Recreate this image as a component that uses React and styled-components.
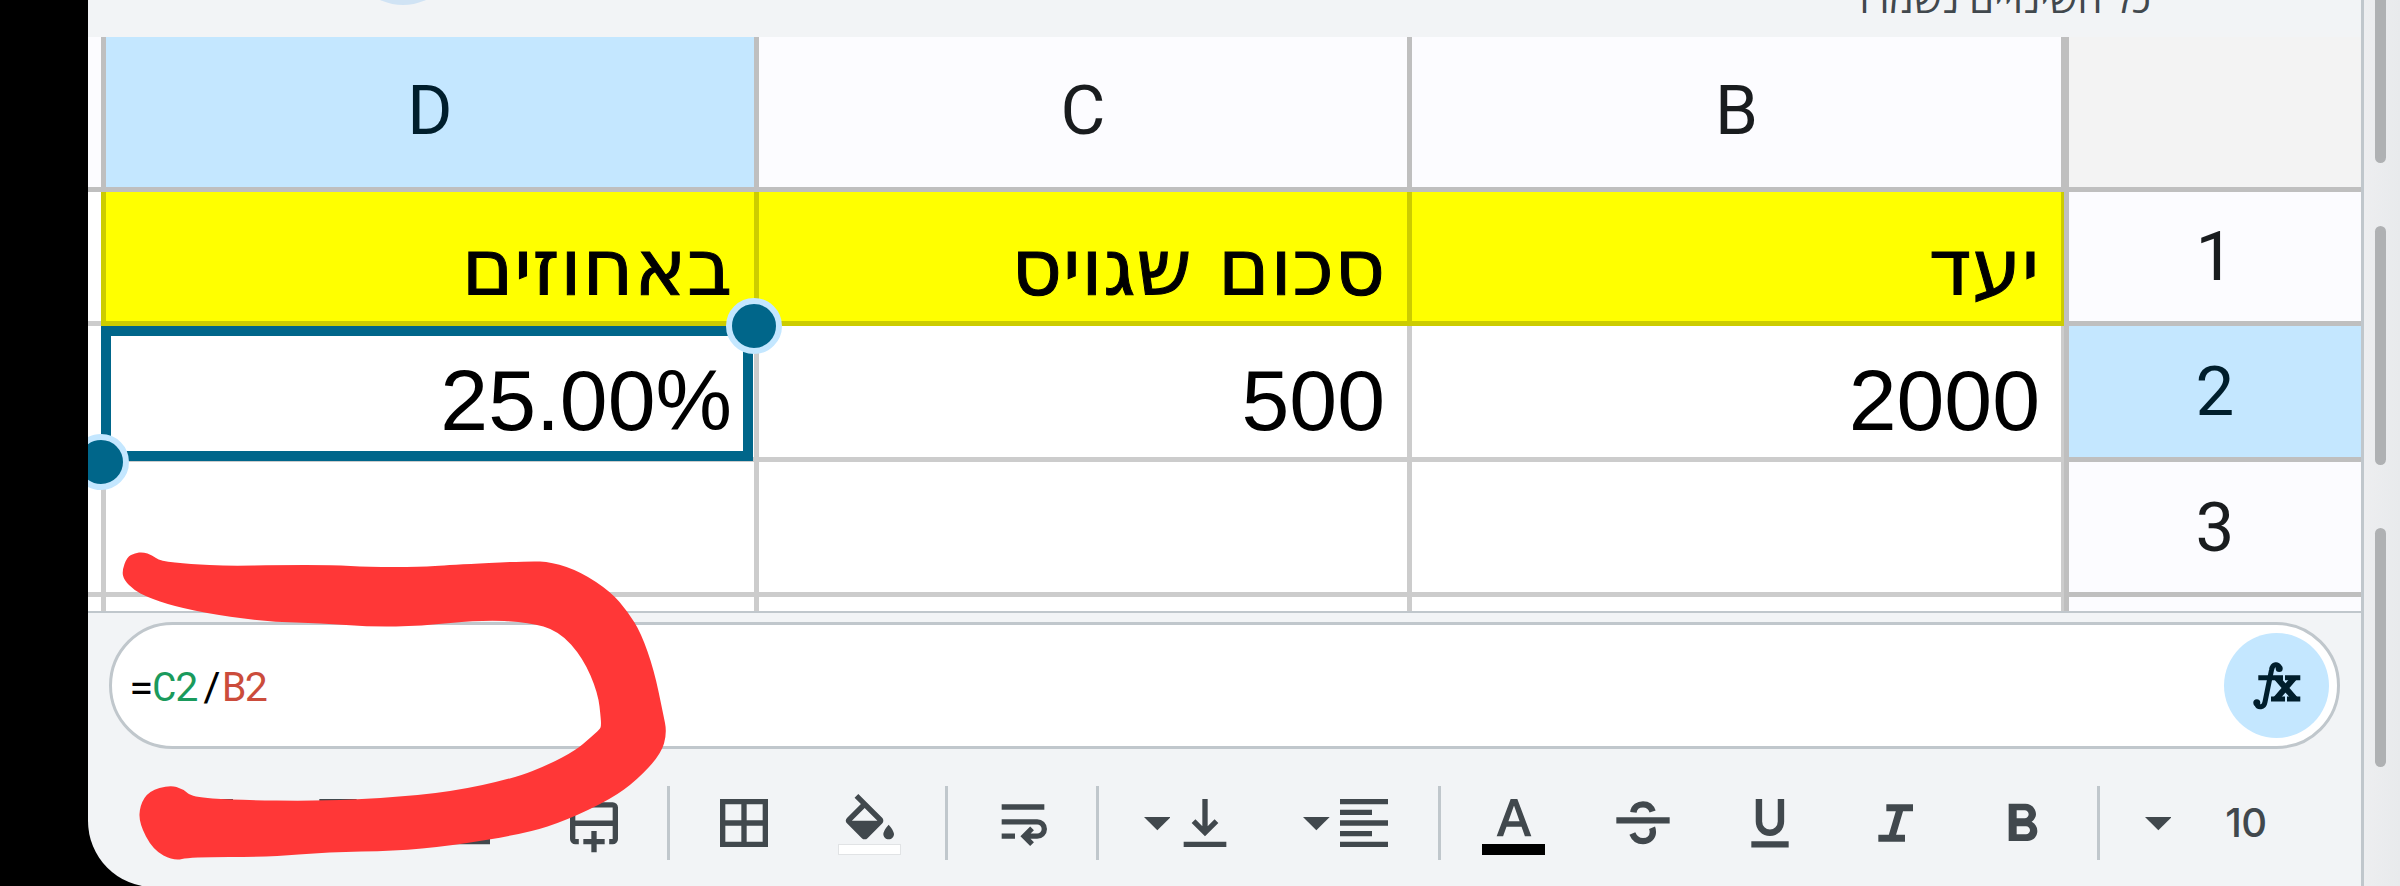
import React from 'react'
import styled, { createGlobalStyle } from 'styled-components'
import { MdBorderAll, MdFormatAlignLeft, MdFormatBold, MdFormatColorFill, MdFormatColorText } from 'react-icons/md'


const GlobalStyle = createGlobalStyle`
   body {
      margin: 0;
      background: #000000;
      overflow: hidden;
   }
`

const Screen = styled.div`
   position: relative;
   display: flex;
   width: 2400px;
   height: 886px;
   padding-left: 88px;
   box-sizing: border-box;
   overflow: hidden;
`

const Panel = styled.main`
   display: flex;
   flex-direction: column;
   width: 2273px;
   height: 887px;
   background: #f2f4f6;
   border-right: 3px solid #c0c7cc;
   border-bottom-left-radius: 66px;
   overflow: hidden;
`

const TopBar = styled.header`
   position: relative;
   display: flex;
   justify-content: flex-end;
   flex: none;
   height: 37px;
   overflow: hidden;
`

const Avatar = styled.span`
   position: absolute;
   left: 260px;
   bottom: 32px;
   width: 110px;
   height: 110px;
   border-radius: 50%;
   background: #d0e3f4;
`

const Status = styled.span`
   margin: -30px 210px 0 0;
   font: 500 39.6px/56px "Open Sans", "Noto Sans", sans-serif;
   color: #41484d;
   white-space: nowrap;
`

const Sheet = styled.section`
   position: relative;
   display: grid;
   flex: none;
   grid-template-columns: 13px 653px 653px 657px 297px;
   grid-template-rows: 155px 134px 136px 135px 20px;
   height: 574px;
   border-bottom: 2px solid #c0c7cc;
   background: #ffffff;
   overflow: hidden;
`

const Cell = styled.div`
   display: flex;
   align-items: center;
   justify-content: flex-end;
   box-sizing: border-box;
   padding: ${p => p.$yellow ? 0 : 16}px ${p => p.$last || p.$yellow ? 21 : 22}px 0 0;
   border: 0 solid ${p => p.$yellow ? '#cccc00' : '#cccccc'};
   border-width: 0 ${p => p.$last ? 3 : 0}px 5px ${p => p.$stub ? 0 : 5}px;
   background: ${p => p.$yellow ? '#ffff00' : '#ffffff'};
   font: 400 86px/96px "Liberation Sans", Arial, sans-serif;
   color: #000000;
   white-space: nowrap;
`

const Hebrew = styled.span`
   font: 400 78px/98px "DejaVu Sans", sans-serif;
   letter-spacing: 0.8px;
   -webkit-text-stroke: 1px #000000;
   padding-top: 23px;
`

const Heading = styled(Cell)`
   justify-content: center;
   padding: 0 0 3px;
   border-color: #bfbfbf;
   background: ${p => p.$active ? '#c4e7ff' : p.$corner ? '#f3f3f3' : '#fcfcff'};
   font: 400 69px/80px Roboto, sans-serif;
   color: ${p => p.$active ? '#001e2c' : '#191c1e'};
`

const RowHeading = styled(Heading)`
   padding: 1px 0 0;
`

const Selection = styled.div`
   position: absolute;
   left: 13px;
   top: 289px;
   width: 652px;
   height: 135px;
   box-sizing: border-box;
   border: 10px solid #00668a;
`

const Handle = styled.span`
   position: absolute;
   width: 44px;
   height: 44px;
   border: 6px solid #c4e7ff;
   border-radius: 50%;
   background: #00668a;
   ${p => p.$end ? 'left: -38px; bottom: -39px;' : 'right: -39px; top: -38px;'}
`

const FormulaRow = styled.div`
   flex: none;
   padding: 9px 21px 0;
`

const FormulaBar = styled.div`
   display: flex;
   align-items: center;
   justify-content: space-between;
   box-sizing: border-box;
   height: 127px;
   padding: 0 8px 0 17px;
   border: 3px solid #c0c7cc;
   border-radius: 64px;
   background: #ffffff;
`

const Formula = styled.code`
   padding-bottom: 2px;
   font: 400 41px/48px "Roboto Mono", "DejaVu Sans Mono", monospace;
   letter-spacing: -1.4px;
   color: #000000;
`

const Ref = styled.span`
   color: ${p => p.$color};
`

const FxButton = styled.button`
   display: flex;
   align-items: center;
   justify-content: center;
   width: 105px;
   height: 105px;
   padding: 0;
   border: 0;
   border-radius: 50%;
   background: #c4e7ff;
   color: #001e2c;
`

const Toolbar = styled.nav`
   display: flex;
   align-items: center;
   flex: none;
   height: 147px;
   color: #41484d;
`

const Tool = styled.span`
   display: flex;
   flex-direction: column;
   flex: none;
   width: 64px;
   height: 64px;
   margin-left: ${p => p.$gap}px;
   padding-top: ${p => p.$drop || 0}px;
   box-sizing: border-box;
   overflow: visible;

   svg {
      flex: none;
      width: 64px;
      height: ${p => p.$short ? 46 : 64}px;
   }
`

const Swatch = styled.span`
   flex: none;
   box-sizing: border-box;
   width: 63px;
   height: 11px;
   margin-top: ${p => p.$gap}px;
   border: 1px solid ${p => p.$line};
   background: ${p => p.$color};
`

const Divider = styled.span`
   flex: none;
   width: 3px;
   height: 74px;
   margin-left: ${p => p.$gap}px;
   background: #c0c7cc;
`

const CaretIcon = styled.svg`
   flex: none;
   width: 26.7px;
   height: 13.4px;
   margin: 3px 0 0 ${p => p.$gap}px;
`

const FontSize = styled.span`
   margin-left: 54px;
   font: 450 40px/48px Inter, sans-serif;
   letter-spacing: -0.5px;
`

const Gutter = styled.aside`
   flex: 1;
   display: flex;
   flex-direction: column;
   align-items: flex-start;
   gap: 63px;
   padding-left: 11px;
   background: linear-gradient(90deg, #edeef0, #e8eaec);
`

const Thumb = styled.span`
   flex: none;
   width: 11px;
   height: ${p => p.$first ? 169 : 239}px;
   margin-top: ${p => p.$first ? -6 : 0}px;
   border-radius: 6px;
   background: #afb1b3;
`

const Marker = styled.svg`
   position: absolute;
   left: 0;
   top: 0;
   width: 700px;
   height: 886px;
   pointer-events: none;
`

const Stroke = ({ d, width = 2 }) => (
   <svg viewBox="0 0 24 24" fill="none" stroke="currentColor" strokeWidth={width}>
      <path d={d}/>
   </svg>
)

const Caret = ({ gap }) => (
   <CaretIcon $gap={gap} viewBox="7 10 10 5">
      <path d="M7 10l5 5 5-5z" fill="currentColor"/>
   </CaretIcon>
)

const markerPoints = [
   [143, 552], [152, 555], [160, 561], [190, 564], [229, 566], [277, 565], [333, 565], [368, 567],
   [420, 567], [450, 565], [528, 561], [552, 562], [581, 572], [611, 592], [628, 612], [641, 633],
   [654, 670], [663, 713], [667, 733], [661, 754], [637, 780], [611, 799], [567, 820], [528, 833],
   [450, 846], [394, 851], [329, 852], [268, 857], [190, 857], [174, 861], [153, 850], [139, 823],
   [140, 805], [149, 791], [170, 785], [183, 789], [192, 797], [233, 800], [320, 801], [385, 798], [450, 792],
   [515, 778], [550, 764], [576, 750], [590, 738], [600, 729], [601, 726], [601, 720], [598, 693], [583, 658], [559, 631],
   [528, 622], [481, 620], [420, 626], [372, 627], [320, 623], [272, 622], [216, 615], [173, 606],
   [147, 597], [134, 590], [124, 580], [122, 571], [127, 557], [135, 553],
]

// closed curve running through the midpoints of the outline
const smooth = points => {
   const mid = (a, b) => `${(a[0] + b[0]) / 2} ${(a[1] + b[1]) / 2}`
   const parts = points.map((p, i) => `Q${p[0]} ${p[1]} ${mid(p, points[(i + 1) % points.length])}`)
   return `M${mid(points[points.length - 1], points[0])}${parts.join('')}Z`
}

const rows = [
   { number: 1, yellow: true, cells: ['באחוזים', 'סכום שגויס', 'יעד'] },
   { number: 2, active: true, cells: ['25.00%', '500', '2000'] },
   { number: 3, cells: ['', '', ''] },
   { number: '', cells: ['', '', ''] },
]

const SheetGrid = () => (
   <Sheet>
      <Heading $stub/>
      <Heading $active>D</Heading>
      <Heading>C</Heading>
      <Heading $last>B</Heading>
      <Heading $corner/>
      {
         rows.map((row, i) => (
            <React.Fragment key={i}>
               <Cell $stub/>
               {
                  row.cells.map((text, j) => (
                     <Cell key={j} $yellow={row.yellow} $last={j === 2}>
                        {row.yellow ? <Hebrew dir="rtl">{text}</Hebrew> : text}
                     </Cell>
                  ))
               }
               <RowHeading $active={row.active}>{row.number}</RowHeading>
            </React.Fragment>
         ))
      }
      <Selection>
         <Handle/>
         <Handle $end/>
      </Selection>
   </Sheet>
)

const FxIcon = () => (
   <svg width="54" height="54" viewBox="0 0 54 54" fill="none" stroke="currentColor">
      <path d="M29.500 8.500C28.500 4.500 22.500 4.500 21.500 11L15 43c-1 6-7 6-8.200 2" strokeWidth="5"/>
      <circle cx="29.200" cy="9.500" r="3.500" fill="currentColor" stroke="none"/>
      <circle cx="6.800" cy="43.800" r="3.500" fill="currentColor" stroke="none"/>
      <path d="M8.300 18.700H33M35 18.700h15.300M21 39.900h14M37 39.900h13.300" strokeWidth="5"/>
      <path d="M27 19l18 21M44 19L26 40" strokeWidth="6"/>
   </svg>
)

const FormatTools = () => (
   <Toolbar>
      <Tool $gap={89}><Stroke d="M4 20V4h16v16z"/></Tool>
      <Tool $gap={64.5}><Stroke d="M6 4h12v16H6z"/></Tool>
      <Tool $gap={64}><Stroke d="M4 19V5h16v14z"/></Tool>
      <Tool $gap={64.5}>
         <Stroke d="M6.300 19H5a1 1 0 0 1-1-1V6.200a1 1 0 0 1 1-1h14a1 1 0 0 1 1 1V18a1 1 0 0 1-1 1h-1.300M4 12.100h16M12 15v8M8 19h8"/>
      </Tool>
      <Divider $gap={41}/>
      <Tool $gap={42}><MdBorderAll/></Tool>
      <Tool $gap={62} $drop={3.5} $short>
         <MdFormatColorFill viewBox="0 0 24 17.250"/>
         <Swatch $gap={4} $color="#ffffff" $line="#e1e3e5"/>
      </Tool>
      <Divider $gap={43}/>
      <Tool $gap={42.5}>
         <Stroke d="M4 6h16M4 11.550h13.300a2.700 2.700 0 0 1 0 5.400H13M15.400 14l-2.950 2.950 2.950 2.950M4 16.950h5"/>
      </Tool>
      <Divider $gap={41.5}/>
      <Caret gap={44.6}/>
      <Tool $gap={2.3}><Stroke d="M4 20h16M12 3v12M7.700 11.300l4.300 4.300 4.300-4.300"/></Tool>
      <Caret gap={66.7}/>
      <Tool $gap={2}><MdFormatAlignLeft/></Tool>
      <Divider $gap={42}/>
      <Tool $gap={41} $short>
         <MdFormatColorText viewBox="0 0 24 17.250"/>
         <Swatch $gap={7.5} $color="#000000" $line="#000000"/>
      </Tool>
      <Tool $gap={64.7}>
         <Stroke
            width={2.4}
            d="M2 11h20M8.400 8c.2-2 1.900-3 3.600-3s3 .9 3.600 2.700M8 15.900c.8 1.900 2.200 2.900 4 2.900 2.200 0 3.600-1.500 3.700-3.300 0-.7-.1-1.200-.3-1.700"
         />
      </Tool>
      <Tool $gap={63}>
         <Stroke width={2.4} d="M7.850 3v8.400a4.130 4.250 0 0 0 8.260 0V3M5 20h14"/>
      </Tool>
      <Tool $gap={63}><Stroke width={2.6} d="M8 6.300h10M5 17.700h10M13.300 6.300L9.900 17.700"/></Tool>
      <Tool $gap={61.6} $drop={2.7}><MdFormatBold/></Tool>
      <Divider $gap={42.7}/>
      <Caret gap={44.6}/>
      <FontSize>10</FontSize>
   </Toolbar>
)

export default () => (
   <Screen>
      <GlobalStyle/>
      <Panel>
         <TopBar>
            <Avatar/>
            <Status dir="rtl">כל השינויים נשמרו</Status>
         </TopBar>
         <SheetGrid/>
         <FormulaRow>
            <FormulaBar>
               <Formula>
                  =<Ref $color="#1a9a5c">C2</Ref>/<Ref $color="#cb4c3b">B2</Ref>
               </Formula>
               <FxButton aria-label="fx"><FxIcon/></FxButton>
            </FormulaBar>
         </FormulaRow>
         <FormatTools/>
      </Panel>
      <Gutter>
         <Thumb $first/>
         <Thumb/>
         <Thumb/>
      </Gutter>
      <Marker viewBox="0 0 700 886">
         <path d={smooth(markerPoints)} fill="#ff3737"/>
      </Marker>
   </Screen>
)
